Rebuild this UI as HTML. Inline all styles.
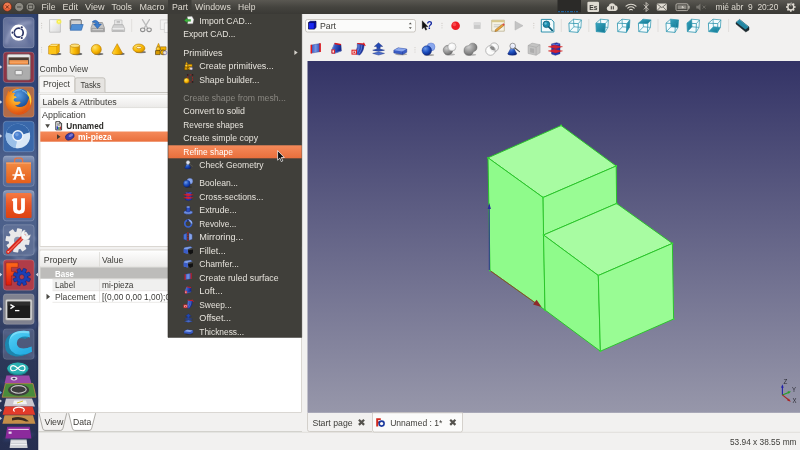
<!DOCTYPE html>
<html lang="es"><head><meta charset="utf-8"><title>FreeCAD</title>
<style>html,body{margin:0;padding:0;background:#f2f1f0;overflow:hidden}svg{display:block;will-change:transform}text{font-family:"Liberation Sans", sans-serif;white-space:pre}</style>
</head><body>
<svg width="800" height="450" viewBox="0 0 800 450">
<defs>
<linearGradient id="gview" x1="0" y1="0" x2="0" y2="1"><stop offset="0" stop-color="#333366"/><stop offset="1" stop-color="#9797aa"/></linearGradient>
<linearGradient id="gpanel" x1="0" y1="0" x2="0" y2="1"><stop offset="0" stop-color="#5a5852"/><stop offset="0.5" stop-color="#45443f"/><stop offset="1" stop-color="#3a3935"/></linearGradient>
<linearGradient id="gorange" x1="0" y1="0" x2="0" y2="1"><stop offset="0" stop-color="#f58a5a"/><stop offset="1" stop-color="#e96f3c"/></linearGradient>

<radialGradient id="gy" cx="0.35" cy="0.3" r="0.8"><stop offset="0" stop-color="#ffe36a"/><stop offset="0.6" stop-color="#f7b500"/><stop offset="1" stop-color="#c98600"/></radialGradient>
<linearGradient id="gyl" x1="0" y1="0" x2="1" y2="0"><stop offset="0" stop-color="#ffd84a"/><stop offset="0.5" stop-color="#f9b800"/><stop offset="1" stop-color="#d08c00"/></linearGradient>
<radialGradient id="gblue" cx="0.35" cy="0.3" r="0.8"><stop offset="0" stop-color="#6f9be8"/><stop offset="0.5" stop-color="#1c4fc0"/><stop offset="1" stop-color="#0a1f70"/></radialGradient>
<radialGradient id="ggrey" cx="0.35" cy="0.3" r="0.8"><stop offset="0" stop-color="#cfcfcf"/><stop offset="0.6" stop-color="#8e8e8e"/><stop offset="1" stop-color="#5f5f5f"/></radialGradient>
<radialGradient id="gwhite" cx="0.4" cy="0.35" r="0.8"><stop offset="0" stop-color="#ffffff"/><stop offset="0.7" stop-color="#f1f1f1"/><stop offset="1" stop-color="#bdbdbd"/></radialGradient>
<linearGradient id="gpage" x1="0" y1="0" x2="1" y2="1"><stop offset="0" stop-color="#ffffff"/><stop offset="1" stop-color="#d9d9d9"/></linearGradient>
<linearGradient id="gteal" x1="0" y1="0" x2="1" y2="1"><stop offset="0" stop-color="#3aa6c0"/><stop offset="1" stop-color="#0f7590"/></linearGradient>
<radialGradient id="gglow" cx="0.5" cy="0.5" r="0.5"><stop offset="0" stop-color="#ffffc0"/><stop offset="0.45" stop-color="#f8ee40"/><stop offset="1" stop-color="#f8ee40" stop-opacity="0"/></radialGradient>
<linearGradient id="gbl" x1="0" y1="0" x2="1" y2="0"><stop offset="0" stop-color="#3454c0"/><stop offset="0.5" stop-color="#7696e4"/><stop offset="1" stop-color="#2c4cb8"/></linearGradient>
<linearGradient id="gbl2" x1="0" y1="0" x2="1" y2="0.3"><stop offset="0" stop-color="#5a7cdc"/><stop offset="0.6" stop-color="#2a48b4"/><stop offset="1" stop-color="#14268a"/></linearGradient>
<filter id="soft" x="-20%" y="-20%" width="140%" height="140%"><feGaussianBlur stdDeviation="0.35"/></filter>
<filter id="soft2" x="-20%" y="-20%" width="140%" height="140%"><feGaussianBlur stdDeviation="0.6"/></filter>

<linearGradient id="glaunch" x1="0" y1="0" x2="0" y2="1">
<stop offset="0" stop-color="#2e416f"/><stop offset="0.24" stop-color="#31467a"/><stop offset="0.325" stop-color="#4a5e8a"/><stop offset="0.5" stop-color="#4c608a"/><stop offset="0.58" stop-color="#46577c"/><stop offset="0.65" stop-color="#38466e"/><stop offset="0.78" stop-color="#2c3859"/><stop offset="1" stop-color="#262e50"/></linearGradient>
<radialGradient id="gdash" cx="0.5" cy="0.5" r="0.75"><stop offset="0" stop-color="#a2aac6"/><stop offset="0.45" stop-color="#7480a6"/><stop offset="1" stop-color="#5a6892"/></radialGradient>
<linearGradient id="gbag" x1="0" y1="0" x2="0" y2="1"><stop offset="0" stop-color="#f28a42"/><stop offset="1" stop-color="#e65f1c"/></linearGradient>
<linearGradient id="gu1" x1="0" y1="0" x2="0" y2="1"><stop offset="0" stop-color="#f47a44"/><stop offset="0.5" stop-color="#ea5322"/><stop offset="1" stop-color="#dc4212"/></linearGradient>
<linearGradient id="gcab" x1="0" y1="0" x2="0" y2="1"><stop offset="0" stop-color="#d6d6d6"/><stop offset="1" stop-color="#8f8f8f"/></linearGradient>
<radialGradient id="gff" cx="0.45" cy="0.35" r="0.75"><stop offset="0" stop-color="#ffd23a"/><stop offset="0.45" stop-color="#f58a1c"/><stop offset="1" stop-color="#d8420e"/></radialGradient>
<radialGradient id="gglobe" cx="0.4" cy="0.35" r="0.7"><stop offset="0" stop-color="#5aa0e8"/><stop offset="1" stop-color="#14478e"/></radialGradient>
<linearGradient id="gF" x1="0" y1="0" x2="0" y2="1"><stop offset="0" stop-color="#ff6a1a"/><stop offset="1" stop-color="#e01a10"/></linearGradient>
<linearGradient id="gC" x1="0" y1="0" x2="0.6" y2="1"><stop offset="0" stop-color="#56d2f6"/><stop offset="1" stop-color="#25aee4"/></linearGradient>
<linearGradient id="gtile" x1="0" y1="0" x2="0" y2="1"><stop offset="0" stop-color="#93a2c0"/><stop offset="0.25" stop-color="#6a7ca6"/><stop offset="1" stop-color="#586b98"/></linearGradient>
<filter id="lb" x="-10%" y="-10%" width="120%" height="120%"><feGaussianBlur stdDeviation="0.45"/></filter>
<filter id="lb2" x="-30%" y="-30%" width="160%" height="160%"><feGaussianBlur stdDeviation="1.4"/></filter>
<linearGradient id="ghead" x1="0" y1="0" x2="0" y2="1"><stop offset="0" stop-color="#fdfdfd"/><stop offset="1" stop-color="#ebeae8"/></linearGradient>
</defs>
<rect x="0" y="0" width="800" height="450" fill="#f2f1f0" />
<rect x="307.5" y="61" width="492.5" height="351.8" fill="url(#gview)" />
<polygon points="488,157.8 561.1,125.5 616.2,166 543.1,197.5" fill="#a8fca2" stroke="#27c427" stroke-width="0.95" stroke-linejoin="round"/>
<polygon points="488,157.8 543.1,197.5 545,310 490,270.5" fill="#8ffb8b" stroke="#27c427" stroke-width="0.95" stroke-linejoin="round"/>
<polygon points="543.1,197.5 616.2,166 616.6,203.5 543.5,235" fill="#99fc94" stroke="#27c427" stroke-width="0.95" stroke-linejoin="round"/>
<polygon points="543.5,235 616.6,203.5 672.4,243.4 598.3,275.5" fill="#a8fca2" stroke="#27c427" stroke-width="0.95" stroke-linejoin="round"/>
<polygon points="543.5,235 598.3,275.5 600.4,351.2 545,310" fill="#8ffb8b" stroke="#27c427" stroke-width="0.95" stroke-linejoin="round"/>
<polygon points="598.3,275.5 672.4,243.4 673.6,319 600.4,351.2" fill="#99fc94" stroke="#27c427" stroke-width="0.95" stroke-linejoin="round"/>
<circle cx="488" cy="157.8" r="0.9" fill="#33e033"/>
<circle cx="561.1" cy="125.5" r="0.9" fill="#33e033"/>
<circle cx="616.2" cy="166" r="0.9" fill="#33e033"/>
<circle cx="543.1" cy="197.5" r="0.9" fill="#33e033"/>
<circle cx="616.6" cy="203.5" r="0.9" fill="#33e033"/>
<circle cx="543.5" cy="235" r="0.9" fill="#33e033"/>
<circle cx="490" cy="270.5" r="0.9" fill="#33e033"/>
<circle cx="545" cy="310" r="0.9" fill="#33e033"/>
<circle cx="672.4" cy="243.4" r="0.9" fill="#33e033"/>
<circle cx="598.3" cy="275.5" r="0.9" fill="#33e033"/>
<circle cx="673.6" cy="319" r="0.9" fill="#33e033"/>
<circle cx="600.4" cy="351.2" r="0.9" fill="#33e033"/>
<path d="M489.3 270 L489.3 205" stroke="#2a2a9a" stroke-width="0.9" fill="none"/>
<path d="M489.3 203 l-1.6 6 h3.2z" fill="#2a2a9a"/>
<path d="M490.8 271.2 L537 304" stroke="#a03030" stroke-width="0.9" fill="none"/>
<path d="M541.6 307 l-8.6 -2.6 3.6 -4.6z" fill="#8e2a2a"/>
<path d="M782.4 394.9 V386" stroke="#2222a8" stroke-width="1.1"/><path d="M782.4 384.2 l-1.3 3.6 h2.6z" fill="#2222a8"/>
<path d="M782.4 394.9 L788.6 392.5" stroke="#22a022" stroke-width="1.1"/><path d="M791 391.6 l-3.4 -0.3 1 2.4z" fill="#22a022"/>
<path d="M782.4 394.9 L788.4 399.8" stroke="#a82222" stroke-width="1.1"/><path d="M790.8 401.7 l-3.6 -1.2 1.7 -2z" fill="#a82222"/>
<text x="783.4" y="383.91" font-size="6.4" fill="#2b2b33" font-weight="normal" text-anchor="start" textLength="3.80" lengthAdjust="spacingAndGlyphs" >Z</text>
<text x="792" y="392.21" font-size="6.4" fill="#2b2b33" font-weight="normal" text-anchor="start" textLength="4.00" lengthAdjust="spacingAndGlyphs" >Y</text>
<text x="792.5" y="402.51" font-size="6.4" fill="#2b2b33" font-weight="normal" text-anchor="start" textLength="4.00" lengthAdjust="spacingAndGlyphs" >X</text>
<rect x="0" y="0" width="800" height="14" fill="url(#gpanel)" />
<circle cx="7.3" cy="6.9" r="4.5" fill="#ea6238" stroke="#4a2a1e" stroke-width="0.7"/><circle cx="7.3" cy="5.6" r="3" fill="#f58a5e" opacity="0.6"/>
<path d="M5.7 5.3 l3.2 3.2 M8.9 5.3 l-3.2 3.2" stroke="#6a2410" stroke-width="0.9"/>
<circle cx="19.2" cy="6.9" r="4.5" fill="#8d8b84" stroke="#34332f" stroke-width="0.7"/>
<path d="M17 7 h4.4" stroke="#45443f" stroke-width="1"/>
<circle cx="30.6" cy="6.9" r="4.5" fill="#8d8b84" stroke="#34332f" stroke-width="0.7"/>
<rect x="28.5" y="5.2" width="4.2" height="3.5" fill="none" stroke="#45443f" stroke-width="0.9"/>
<rect x="168" y="0" width="23.5" height="14" fill="#3d3c38" />
<text x="41.5" y="9.97" font-size="9.2" fill="#dfdbd2" font-weight="normal" text-anchor="start" textLength="14.00" lengthAdjust="spacingAndGlyphs" >File</text>
<text x="62.5" y="9.97" font-size="9.2" fill="#dfdbd2" font-weight="normal" text-anchor="start" textLength="15.50" lengthAdjust="spacingAndGlyphs" >Edit</text>
<text x="85" y="9.97" font-size="9.2" fill="#dfdbd2" font-weight="normal" text-anchor="start" textLength="19.50" lengthAdjust="spacingAndGlyphs" >View</text>
<text x="111.5" y="9.97" font-size="9.2" fill="#dfdbd2" font-weight="normal" text-anchor="start" textLength="20.50" lengthAdjust="spacingAndGlyphs" >Tools</text>
<text x="139.5" y="9.97" font-size="9.2" fill="#dfdbd2" font-weight="normal" text-anchor="start" textLength="25.00" lengthAdjust="spacingAndGlyphs" >Macro</text>
<text x="172" y="9.97" font-size="9.2" fill="#dfdbd2" font-weight="normal" text-anchor="start" textLength="16.00" lengthAdjust="spacingAndGlyphs" >Part</text>
<text x="195" y="9.97" font-size="9.2" fill="#dfdbd2" font-weight="normal" text-anchor="start" textLength="35.80" lengthAdjust="spacingAndGlyphs" >Windows</text>
<text x="238" y="9.97" font-size="9.2" fill="#dfdbd2" font-weight="normal" text-anchor="start" textLength="17.50" lengthAdjust="spacingAndGlyphs" >Help</text>
<rect x="557.5" y="0" width="23.5" height="12.3" fill="#2b2a28" />
<path d="M558 11.7 h20" stroke="#1f6fb5" stroke-width="1" stroke-dasharray="2 1 3 1 1 1"/>
<rect x="587.4" y="1.8" width="11.6" height="10.2" rx="1.2" fill="#dfdbd2"/>
<text x="589.2" y="9.76" font-size="8" fill="#3c3b37" font-weight="bold" text-anchor="start" textLength="8.20" lengthAdjust="spacingAndGlyphs" >Es</text>
<path d="M609 11 a2.6 2.6 0 0 1 -0.3 -5.1 a3.4 3.4 0 0 1 6.5 -0.6 a2.9 2.9 0 0 1 0.3 5.7z" fill="#dfdbd2"/>
<path d="M611.3 6.2 v3.2 M613.3 6.2 v3.2" stroke="#3c3b37" stroke-width="1"/>
<g fill="none" stroke="#dfdbd2" stroke-linecap="round"><path d="M626 6.2 a7.2 7.2 0 0 1 10 0" stroke-width="1.1"/><path d="M627.8 8.1 a4.7 4.7 0 0 1 6.4 0" stroke-width="1.1"/><path d="M629.6 9.9 a2.2 2.2 0 0 1 2.8 0" stroke-width="1.1"/></g>
<path d="M643.8 4.6 l4.6 4.6 -2.3 2.3 v-9 l2.3 2.3 -4.6 4.6" fill="none" stroke="#dfdbd2" stroke-width="0.8"/>
<rect x="656.8" y="3.6" width="10" height="7" rx="0.8" fill="#dfdbd2"/><path d="M657.2 4 l4.6 3.6 4.6 -3.6 M657.2 10.3 l3.2 -3.2 M666.4 10.3 l-3.2 -3.2" stroke="#3c3b37" stroke-width="0.7" fill="none"/>
<rect x="676" y="3.8" width="12" height="6.8" rx="1.2" fill="none" stroke="#bdb9b0" stroke-width="0.9"/><rect x="688.3" y="5.8" width="1.3" height="2.8" fill="#bdb9b0"/><rect x="677.6" y="5.3" width="8.8" height="3.8" fill="#8d8a83"/><path d="M681 7.2 l2.4 -1.4 -0.6 1.2 1.6 0 -2.4 1.4 0.6 -1.2z" fill="#e8e5de"/>
<path d="M696.3 5.8 h1.8 l2.4 -2.2 v7.2 l-2.4 -2.2 h-1.8z" fill="#77756f"/><path d="M702.6 5.6 l3 3 M705.6 5.6 l-3 3" stroke="#77756f" stroke-width="0.8"/>
<text x="715.4" y="10.07" font-size="9.2" fill="#dfdbd2" font-weight="normal" text-anchor="start" textLength="63.00" lengthAdjust="spacingAndGlyphs" >mié abr  9  20:20</text>
<g transform="translate(790.8 7) scale(0.9)"><circle r="3.3" fill="none" stroke="#dfdbd2" stroke-width="1.5"/><rect x="-0.9" y="-5.3" width="1.8" height="2.2" fill="#dfdbd2" transform="rotate(0)"/><rect x="-0.9" y="-5.3" width="1.8" height="2.2" fill="#dfdbd2" transform="rotate(45)"/><rect x="-0.9" y="-5.3" width="1.8" height="2.2" fill="#dfdbd2" transform="rotate(90)"/><rect x="-0.9" y="-5.3" width="1.8" height="2.2" fill="#dfdbd2" transform="rotate(135)"/><rect x="-0.9" y="-5.3" width="1.8" height="2.2" fill="#dfdbd2" transform="rotate(180)"/><rect x="-0.9" y="-5.3" width="1.8" height="2.2" fill="#dfdbd2" transform="rotate(225)"/><rect x="-0.9" y="-5.3" width="1.8" height="2.2" fill="#dfdbd2" transform="rotate(270)"/><rect x="-0.9" y="-5.3" width="1.8" height="2.2" fill="#dfdbd2" transform="rotate(315)"/><rect x="-0.7" y="-5.2" width="1.4" height="4.4" fill="#dfdbd2" stroke="#42413c" stroke-width="0.5"/></g>
<rect x="0" y="14" width="38.2" height="436" fill="url(#glaunch)"/>
<g filter="url(#lb2)" opacity="0.55"><path d="M2 232 q18 -6 34 8 M0 262 q14 4 38 -14 M4 250 l30 16" stroke="#7e8fb8" stroke-width="2.4" fill="none"/><path d="M0 330 q20 10 38 -6 M2 352 q16 -8 34 6 M0 300 l38 24" stroke="#3f5388" stroke-width="3" fill="none"/><path d="M0 380 l38 30 M0 420 l38 -20 M4 440 l30 -6" stroke="#34477c" stroke-width="3" fill="none"/></g>
<path d="M37.4 14 V450" stroke="#202848" stroke-width="1.6" opacity="0.35"/>
<rect x="3.3" y="17.5" width="30.8" height="30.4" rx="3" fill="url(#gdash)" fill-opacity="1" stroke="#ffffff" stroke-opacity="0.28" stroke-width="0.7"/>
<g filter="url(#lb2)" opacity="0.5"><path d="M6 44 q4 -20 26 -22" stroke="#c8cee8" stroke-width="2" fill="none"/><path d="M8 22 q18 4 22 22" stroke="#4a5890" stroke-width="2.5" fill="none"/></g>
<circle cx="18.7" cy="32.7" r="8.1" fill="#ffffff"/>
<circle cx="18.7" cy="32.7" r="4.5" fill="none" stroke="#2b3566" stroke-width="1.7"/>
<circle cx="12.60" cy="32.70" r="1.7" fill="#ffffff"/><circle cx="12.60" cy="32.70" r="1.1" fill="#2b3566"/>
<circle cx="21.75" cy="27.42" r="1.7" fill="#ffffff"/><circle cx="21.75" cy="27.42" r="1.1" fill="#2b3566"/>
<circle cx="21.75" cy="37.98" r="1.7" fill="#ffffff"/><circle cx="21.75" cy="37.98" r="1.1" fill="#2b3566"/>
<rect x="3.3" y="52.1" width="30.8" height="30.4" rx="3" fill="#8c3546" fill-opacity="1" stroke="#ffffff" stroke-opacity="0.28" stroke-width="0.7"/>
<g filter="url(#lb)"><rect x="7" y="54.2" width="23.4" height="25.8" rx="1.8" fill="url(#gcab)" stroke="#767676" stroke-width="0.6"/><rect x="8" y="54.8" width="21.4" height="2.4" rx="1" fill="#e8e8e8"/><rect x="8.6" y="57.4" width="20.2" height="7.4" fill="#4c3a30"/><rect x="9.4" y="60.2" width="18.6" height="4.4" fill="#ee8a40"/><path d="M9.4 61 h18.6 M9.4 62.6 h18.6" stroke="#f8b67a" stroke-width="0.6"/><rect x="7.6" y="64.8" width="22.2" height="14.6" rx="1" fill="#adadad"/><rect x="7.6" y="64.8" width="22.2" height="1.6" fill="#dedede"/><rect x="15.2" y="70.4" width="7" height="4.4" rx="0.6" fill="#ededed" stroke="#6a6a6a" stroke-width="0.6"/></g>
<path d="M0 65.2 l2.2 1.8 -2.2 1.8z" fill="#d8dbe6"/>
<rect x="3.3" y="86.8" width="30.8" height="30.4" rx="3" fill="#b26c48" fill-opacity="1" stroke="#ffffff" stroke-opacity="0.28" stroke-width="0.7"/>
<g filter="url(#lb)"><circle cx="18.7" cy="101.5" r="13.2" fill="url(#gff)"/><circle cx="20" cy="98.2" r="9.7" fill="url(#gglobe)"/><path d="M13 92.6 q3.6 -3.4 8.6 -3 M22 90.4 q3.4 1 5 3.6" stroke="#8cc4f0" stroke-width="1.3" fill="none" opacity="0.7"/><path d="M5.8 100 q-0.2 -3.4 1.4 -5.8 q0.2 -2.4 1.6 -3.6 q0.2 2 1.4 3.2 q2.4 -1.8 5 -0.6 q-1.4 1.2 -1.2 2.8 q1.8 0 2.8 1.4 l-2.6 1 q-1.4 1.4 0.2 2.800 q2.200 1.200 4.800 0.2 q1.600 0.2 1.400 1.400 q-1.800 2.600 -5.600 2.600 q4.400 3.200 9.600 0.400 q3.600 -2.600 3.600 -7.600 q2.400 5.600 -0.600 10.600 q-4 5.600 -11 5 q-9.600 -1.400 -10.800 -13.800z" fill="url(#gff)"/><path d="M26.6 90.6 q3.8 2.6 4.6 7.6 q0.6 4 -1 7.4 q0.4 -3.600 -0.8 -6 q-0.2 -3 -2.2 -5 q0.4 -2 -0.6 -4z" fill="#ffd640"/></g>
<path d="M0 100.2 l2.2 1.8 -2.2 1.8z" fill="#d8dbe6"/>
<rect x="3.3" y="121.3" width="30.8" height="30.4" rx="3" fill="#3a68aa" fill-opacity="1" stroke="#ffffff" stroke-opacity="0.28" stroke-width="0.7"/>
<g filter="url(#lb)"><circle cx="17.9" cy="136" r="12.2" fill="#a4c6ea"/><path d="M17.9 136 L6.2 132.4 A12.2 12.2 0 0 1 29.6 132.6z" fill="#3466aa"/><path d="M17.9 136 L29.6 132.6 A12.2 12.2 0 0 1 15.4 147.9z" fill="#dbe8f6"/><path d="M17.9 136 L15.4 147.9 A12.2 12.2 0 0 1 6.2 132.4z" fill="#9cc0e8"/><circle cx="17.9" cy="135.8" r="5.7" fill="#eef4fc"/><circle cx="17.9" cy="135.8" r="4.3" fill="#4a80d0"/><circle cx="16.9" cy="134.6" r="1.8" fill="#7aa6e4" opacity="0.8"/></g>
<path d="M0 134.2 l2.2 1.8 -2.2 1.8z" fill="#d8dbe6"/>
<rect x="3.3" y="155.9" width="30.8" height="30.4" rx="3" fill="url(#gtile)" fill-opacity="0.9" stroke="#ffffff" stroke-opacity="0.28" stroke-width="0.7"/>
<g filter="url(#lb)"><path d="M14.6 164 v-3.4 q0 -2.4 2.2 -2.4 h3.6 q2.2 0 2.2 2.4 v3.4" fill="none" stroke="#e8703a" stroke-width="1.3"/><path d="M6.2 162.6 h24.8 v19 q0 1.6 -1.6 1.6 h-21.6 q-1.6 0 -1.6 -1.6z" fill="url(#gbag)"/><path d="M6.2 162.6 h24.8 v1.2 h-24.8z" fill="#f8a468"/></g>
<text x="18.7" y="179.4" font-size="16.4" font-weight="bold" fill="#ffffff" text-anchor="middle" textLength="11" lengthAdjust="spacingAndGlyphs">A</text>
<path d="M12.4 175 h12.6" stroke="#ffffff" stroke-width="1.3"/><path d="M12.8 179.2 h3 M21.6 179.2 h3" stroke="#ffffff" stroke-width="1"/>
<rect x="3.3" y="190.5" width="30.8" height="30.4" rx="3" fill="url(#gtile)" fill-opacity="0.9" stroke="#ffffff" stroke-opacity="0.28" stroke-width="0.7"/>
<rect x="5.9" y="192.9" width="25.7" height="25.2" rx="1.6" fill="url(#gu1)" filter="url(#lb)"/>
<path d="M13.8 198.2 h3.3 v10.4 q0 1.9 2 1.9 q2 0 2 -1.9 v-10.4 h3.8 v10.8 q0 4.9 -5.8 4.9 q-6 0 -6 -4.9 v-7.6 l-1.5 -1.3z" fill="#ffffff" filter="url(#lb)"/>
<rect x="3.3" y="224.8" width="30.8" height="30.4" rx="3" fill="#64749a" fill-opacity="0.75" stroke="#ffffff" stroke-opacity="0.28" stroke-width="0.7"/>
<g filter="url(#lb)"><g transform="translate(17.6 240.4)" fill="#e9e9ea"><circle r="9"/><rect x="-2.6" y="-12" width="5.2" height="6" rx="0.8" transform="rotate(10)"/><rect x="-2.6" y="-12" width="5.2" height="6" rx="0.8" transform="rotate(55)"/><rect x="-2.6" y="-12" width="5.2" height="6" rx="0.8" transform="rotate(100)"/><rect x="-2.6" y="-12" width="5.2" height="6" rx="0.8" transform="rotate(145)"/><rect x="-2.6" y="-12" width="5.2" height="6" rx="0.8" transform="rotate(190)"/><rect x="-2.6" y="-12" width="5.2" height="6" rx="0.8" transform="rotate(235)"/><rect x="-2.6" y="-12" width="5.2" height="6" rx="0.8" transform="rotate(280)"/><rect x="-2.6" y="-12" width="5.2" height="6" rx="0.8" transform="rotate(325)"/><circle r="3.6" fill="#8c96b0"/></g>
<path d="M8 252 L24 236" stroke="#d6281e" stroke-width="4" stroke-linecap="round"/><path d="M9 251.4 L23.6 237" stroke="#f26a5a" stroke-width="1.2" stroke-linecap="round"/><circle cx="8.2" cy="251.8" r="0.9" fill="#f4c8c0"/><path d="M22 238.6 q-2.6 -4.4 1.2 -8 l2 -0.6 -1.2 3.8 2.6 2.4 3.8 -1.4 q-0.4 5 -5.6 5.6z" fill="#f4f4f4" stroke="#c8c8c8" stroke-width="0.4"/></g>
<rect x="3.3" y="259.8" width="30.8" height="30.4" rx="3" fill="#b03c48" fill-opacity="1" stroke="#ffffff" stroke-opacity="0.28" stroke-width="0.7"/>
<g filter="url(#lb)"><path d="M6 262.8 h12 v4.6 h-6.6 v4 h4.6 v4.4 h-4.6 v9.4 h-5.4z" fill="url(#gF)" stroke="#7a1408" stroke-width="0.4"/>
<g transform="translate(21.8 277)" fill="#1a3fb4" stroke="#0a1a60" stroke-width="0.4"><circle r="6"/><rect x="-1.8" y="-8.8" width="3.6" height="4.4" rx="0.5" transform="rotate(22)"/><rect x="-1.8" y="-8.8" width="3.6" height="4.4" rx="0.5" transform="rotate(67)"/><rect x="-1.8" y="-8.8" width="3.6" height="4.4" rx="0.5" transform="rotate(112)"/><rect x="-1.8" y="-8.8" width="3.6" height="4.4" rx="0.5" transform="rotate(157)"/><rect x="-1.8" y="-8.8" width="3.6" height="4.4" rx="0.5" transform="rotate(202)"/><rect x="-1.8" y="-8.8" width="3.6" height="4.4" rx="0.5" transform="rotate(247)"/><rect x="-1.8" y="-8.8" width="3.6" height="4.4" rx="0.5" transform="rotate(292)"/><rect x="-1.8" y="-8.8" width="3.6" height="4.4" rx="0.5" transform="rotate(337)"/><circle r="5.6" stroke="none"/><circle r="2.5" fill="#b03c48" stroke="#0a1a60"/></g></g>
<path d="M0 272.8 l2.2 1.8 -2.2 1.8z" fill="#d8dbe6"/>
<path d="M38 272.8 l-2.2 1.8 2.2 1.8z" fill="#d8dbe6"/>
<rect x="3.3" y="293.9" width="30.8" height="30.4" rx="3" fill="#8d8d96" fill-opacity="0.85" stroke="#ffffff" stroke-opacity="0.28" stroke-width="0.7"/>
<g filter="url(#lb)"><rect x="5.4" y="299.3" width="26.8" height="21" rx="1.6" fill="#d4d4d4" stroke="#8a8a8a" stroke-width="0.5"/><rect x="7.4" y="301.6" width="22.8" height="16.4" fill="#1c1c1c"/><rect x="7.4" y="301.6" width="22.8" height="4" fill="#3a3a3a" opacity="0.6"/><path d="M10.4 304.6 l3.4 2 -3.4 2" stroke="#ffffff" stroke-width="1.3" fill="none"/><path d="M15 310.6 h4.4" stroke="#ffffff" stroke-width="1.3"/></g>
<path d="M0 307.2 l2.2 1.8 -2.2 1.8z" fill="#d8dbe6"/>
<rect x="3.3" y="328.9" width="30.8" height="30.4" rx="3" fill="#8a94b4" fill-opacity="0.35" stroke="#ffffff" stroke-opacity="0.2" stroke-width="0.7"/>
<g filter="url(#lb)"><path d="M29.2 331.2 L30 337.4 Q24 335.5 19.5 338 Q16.6 340 16.8 343 Q17 346.5 20 348 Q25 349.5 31.6 346.4 L32 351.8 Q26 355.2 19.5 354.8 Q9 353.6 8.8 343.6 Q9 332 20 331 Q25 330.6 29.2 331.2z" transform="translate(-3.8 1.7)" fill="#1b86ae"/><path d="M29.2 331.2 L30 337.4 Q24 335.5 19.5 338 Q16.6 340 16.8 343 Q17 346.5 20 348 Q25 349.5 31.6 346.4 L32 351.8 Q26 355.2 19.5 354.8 Q9 353.6 8.8 343.6 Q9 332 20 331 Q25 330.6 29.2 331.2z" transform="translate(-1.9 0.85)" fill="#1b86ae"/><path d="M29.2 331.2 L30 337.4 Q24 335.5 19.5 338 Q16.6 340 16.8 343 Q17 346.5 20 348 Q25 349.5 31.6 346.4 L32 351.8 Q26 355.2 19.5 354.8 Q9 353.6 8.8 343.6 Q9 332 20 331 Q25 330.6 29.2 331.2z" fill="url(#gC)"/><path d="M29.2 331.2 Q25 330.6 20 331 Q11 332 9.4 340 Q13 333.4 21 333 Q26 332.8 29.5 333.6z" fill="#8fe2fa" opacity="0.7"/></g>
<g filter="url(#lb)">
<ellipse cx="17.8" cy="369" rx="10.6" ry="6.2" fill="#178a92"/><ellipse cx="17.8" cy="368.2" rx="10.4" ry="5.6" fill="#2bb0b2"/><path d="M17.8 368.4 q-2.4 -2.8 -4.6 -2.8 q-2.6 0 -2.6 2.6 q0 2.6 2.6 2.6 q2.2 0 4.6 -2.4 q2.4 -2.8 4.6 -2.8 q2.6 0 2.6 2.6 q0 2.6 -2.6 2.6 q-2.2 0 -4.6 -2.4z" fill="none" stroke="#ffffff" stroke-width="1.1"/>
<path d="M6.4 375.4 h22.8 l2.2 7.8 h-26.8z" fill="#9a4aa8"/><ellipse cx="14" cy="378.6" rx="3.4" ry="1.8" fill="#e4dcea"/><ellipse cx="14" cy="378.6" rx="1.6" ry="0.9" fill="#3a2a5a"/>
<path d="M5.4 383.6 h27.6 l3 13.6 h-33.8z" fill="#4a8c3a" stroke="#d08a4a" stroke-width="0.7"/><ellipse cx="18.6" cy="390" rx="10.6" ry="5.8" fill="#3c3c3c"/><ellipse cx="18.6" cy="389.4" rx="7.6" ry="3.8" fill="none" stroke="#c8c8c8" stroke-width="1.1"/>
<path d="M6 398.4 h26 l3 8 h-31z" fill="#c9c5cd"/><path d="M14 400.6 h12 l1 3.6 h-14z" fill="#f1f1f1"/><path d="M17 403 l6 -2" stroke="#d8c020" stroke-width="0.9"/>
<path d="M5 406.4 h27.6 l2.6 8.4 h-32.6z" fill="#e23a2a"/><path d="M14.6 411.4 a5.4 2.6 0 1 1 8.6 0" fill="none" stroke="#ffffff" stroke-width="1.2"/>
<path d="M4.6 415.2 h28.4 l2.4 8.6 h-33z" fill="#c48e48"/><path d="M12 418 q7 -2.4 13 0.6 l4 2.6 -3 0.4 q-6 -3 -14 -1z" fill="#3a2c20"/>
<path d="M7.2 426.8 h22.6 l1.6 11.6 h-26z" fill="#8c2c9c"/><path d="M8.4 429.4 h20.4" stroke="#e8d8ee" stroke-width="1.1"/><rect x="8.6" y="431.6" width="3" height="2.2" fill="#e8d8ee"/>
<path d="M10.6 439.6 h16 l1 8.4 h-18z" fill="#cfd0d4"/><path d="M11 442 h15.6 M10.8 444.6 h16" stroke="#f4f4f6" stroke-width="1"/>
</g>
<path d="M0 391.0 l2 1.6 -2 1.6z" fill="#6aa8e8"/>
<path d="M0 399.4 l2 1.6 -2 1.6z" fill="#c8ccd8"/>
<path d="M0 408.79999999999995 l2 1.6 -2 1.6z" fill="#c8ccd8"/>
<path d="M0 416.79999999999995 l2 1.6 -2 1.6z" fill="#c8ccd8"/>
<rect x="305.5" y="19.5" width="110" height="12.5" rx="2" fill="#fbfbfa" stroke="#b9b5ae" stroke-width="0.7"/>
<path d="M308.5 22.6 l1.8 -1.3 h5.7 v6.3 l-1.8 1.5 h-5.7z" fill="#0c14d4" stroke="#06063c" stroke-width="0.7" stroke-linejoin="round"/><path d="M308.5 22.6 h5.7 l1.8 -1.3 M314.2 22.6 v6.5" fill="none" stroke="#06063c" stroke-width="0.6"/><path d="M309 23.1 h4.8 v5.5 h-4.8z" fill="#1a28f0"/>
<text x="320" y="28.97" font-size="9.2" fill="#3c3b37" font-weight="normal" text-anchor="start" textLength="16.00" lengthAdjust="spacingAndGlyphs" >Part</text>
<path d="M408.8 24.3 l1.5 -1.8 1.5 1.8z M408.8 27.3 l1.5 1.8 1.5 -1.8z" fill="#55534e"/>
<path d="M41.6 23.4 v0.01 M41.6 25.599999999999998 v0.01 M41.6 27.799999999999997 v0.01" stroke="#cfccc7" stroke-width="1.2" stroke-linecap="round"/>
<g transform="translate(49.2 19.3)"><path d="M0.4 0.3 h10.8 v12.6 h-10.8z" fill="url(#gpage)" stroke="#b8b8b8" stroke-width="0.7"/><circle cx="9.7" cy="2.4" r="3.2" fill="url(#gglow)"/></g>
<g transform="translate(69.4 19.3)"><path d="M0.6 1.2 l1 -1 h9.6 l0.8 1 v8.6 h-11.4z" fill="#8c8c8c" stroke="#5e5e5e" stroke-width="0.6"/><path d="M2 1.4 h9.2 v6 h-9.2z" fill="#e6e6e6"/><path d="M2.6 2.6 h8 M2.6 3.8 h8" stroke="#aaa" stroke-width="0.5"/><path d="M2.4 5.2 h11.4 l-1.8 5.8 h-11.2z" fill="#4f8ed4" stroke="#2c62a6" stroke-width="0.6"/></g>
<g transform="translate(90.6 19.3)"><path d="M0.4 8.4 l2 -5.2 h9.4 l2 5.2 v4 h-13.4z" fill="#c4c4c4" stroke="#7d7d7d" stroke-width="0.6"/><path d="M0.6 8.6 h13 v3.6 h-13z" fill="#a2a2a2"/><path d="M1.8 10.4 h10.6" stroke="#dcdcdc" stroke-width="0.8"/><path d="M1.4 2.8 q3.4 -3.6 6.6 0.2 v1.8 h2.8 l-3.9 4.4 -3.9 -4.4 h2.6 q-1.2 -2.6 -4.2 -2z" fill="#3a7ccc" stroke="#1b4f98" stroke-width="0.5"/></g>
<g transform="translate(111.6 19.7)" opacity="0.92"><path d="M3 0.3 h7.4 v5 h-7.4z" fill="#e9e9e9" stroke="#a9a9a9" stroke-width="0.6"/><path d="M5 1.8 h3.4 M5 3 h3.4" stroke="#9a9a9a" stroke-width="0.6"/><path d="M0.4 8.8 l1.6 -3.8 h9.4 l1.6 3.8 v3 h-12.6z" fill="#cfcfcf" stroke="#9f9f9f" stroke-width="0.6"/><path d="M1 9 h11.4" stroke="#f2f2f2" stroke-width="1"/><path d="M1.4 10.9 h10.6" stroke="#aaa" stroke-width="0.7"/></g>
<path d="M131.7 19 v13" stroke="#dcd9d5" stroke-width="0.8"/>
<g transform="translate(139.8 19.2)" fill="none" stroke="#a4a4a4" stroke-linecap="round"><path d="M2.6 0.4 L7.8 9 M9.6 0.4 L4.4 9" stroke-width="1.3" stroke="#bcbcbc"/><ellipse cx="2.9" cy="10.6" rx="2.2" ry="1.8" stroke-width="1.1" stroke="#8e8e8e"/><ellipse cx="9.3" cy="10.6" rx="2.2" ry="1.8" stroke-width="1.1" stroke="#8e8e8e"/></g>
<g transform="translate(160 19.5)" opacity="0.7"><path d="M0.4 0.4 h7.6 v9.6 h-7.6z" fill="#f3f3f3" stroke="#b5b5b5" stroke-width="0.6"/><path d="M4.4 3.4 h7.6 v9.6 h-7.6z" fill="#f8f8f8" stroke="#b5b5b5" stroke-width="0.6"/></g>
<g transform="translate(421.8 20.4)"><path d="M0.4 0.4 v8.2 l2 -1.8 1.4 3 1.3 -0.6 -1.4 -2.9 h2.6z" fill="#111" stroke="#111" stroke-width="0.3"/><text x="4.6" y="8.6" font-size="10" font-weight="bold" fill="#1428a0">?</text></g>
<path d="M442 23.4 v0.01 M442 25.599999999999998 v0.01 M442 27.799999999999997 v0.01" stroke="#cfccc7" stroke-width="1.2" stroke-linecap="round"/>
<circle cx="455.6" cy="25.8" r="4.3" fill="#ee1c24"/><circle cx="454.40000000000003" cy="24.400000000000002" r="1.8" fill="#ff6a6a" opacity="0.6" filter="url(#soft)"/>
<rect x="473.8" y="22.5" width="6.8" height="6.4" fill="#c9c9c9"/><rect x="473.8" y="22.5" width="6.8" height="2.6" fill="#dadada"/>
<g transform="translate(491.3 18.8)"><path d="M0.4 1.4 h12.6 v11 h-12.6z" fill="#f6f3e6" stroke="#a79c72" stroke-width="0.6"/><path d="M0.4 1.4 h12.6 v2 h-12.6z" fill="#d8c98a"/><path d="M2.4 6 h7 M2.4 8 h5" stroke="#a9a9a9" stroke-width="0.6"/><path d="M4.4 10.6 l6.6 -5.2 1.4 1.6 -6.6 5.2 -2.2 0.6z" fill="#e8a33a" stroke="#8a5a18" stroke-width="0.5"/><path d="M11 5.4 l1.4 1.6 1.2 -0.9 -1.4 -1.7z" fill="#d44"/></g>
<path d="M515 21.3 l8 4.4 -8 4.4z" fill="#c4c4c4" stroke="#b2b2b2" stroke-width="0.5"/>
<path d="M533.8 23.4 v0.01 M533.8 25.599999999999998 v0.01 M533.8 27.799999999999997 v0.01" stroke="#cfccc7" stroke-width="1.2" stroke-linecap="round"/>
<g transform="translate(540.8 18.9)"><path d="M0.5 0.5 h10 l2.6 2.6 v10 h-12.6z" fill="#f2fbfd" stroke="#1a86a4" stroke-width="0.9"/><circle cx="5.6" cy="5.4" r="3.3" fill="#1d8eae" stroke="#0c5e78" stroke-width="0.8"/><circle cx="4.8" cy="4.6" r="1.2" fill="#7fd0e4" opacity="0.8"/><path d="M8 8 l3.4 3.4" stroke="#0c5e78" stroke-width="1.8" stroke-linecap="round"/></g>
<path d="M561.3 19 v13" stroke="#dcd9d5" stroke-width="0.8"/>
<g transform="translate(568.5 18.8)" stroke-linejoin="round">
<path d="M0.4 4.4 L5 0.4 L12.9 1.1 L12.4 8.6 L9.4 13.6 L0.8 12.8z" fill="#f4fbfd"/>
<polygon points="5,0.4 12.9,1.1 12.4,8.6 5.4,8" fill="none" stroke="#2a93ad" stroke-width="0.7"/>
<path d="M0.4 4.4 L5 0.4" stroke="#2a93ad" stroke-width="0.7"/>
<path d="M9.8 4.8 L12.9 1.1" stroke="#2a93ad" stroke-width="0.7"/>
<path d="M9.4 13.6 L12.4 8.6" stroke="#2a93ad" stroke-width="0.7"/>
<path d="M0.8 12.8 L5.4 8" stroke="#2a93ad" stroke-width="0.7"/>
<polygon points="0.4,4.4 9.8,4.8 9.4,13.6 0.8,12.8" fill="none" stroke="#2a93ad" stroke-width="0.8"/>
</g>
<path d="M588.8 19 v13" stroke="#dcd9d5" stroke-width="0.8"/>
<g transform="translate(595.5 18.8)" stroke-linejoin="round">
<path d="M0.4 4.4 L5 0.4 L12.9 1.1 L12.4 8.6 L9.4 13.6 L0.8 12.8z" fill="#f4fbfd"/>
<polygon points="5,0.4 12.9,1.1 12.4,8.6 5.4,8" fill="none" stroke="#2a93ad" stroke-width="0.7"/>
<path d="M0.4 4.4 L5 0.4" stroke="#2a93ad" stroke-width="0.7"/>
<path d="M9.8 4.8 L12.9 1.1" stroke="#2a93ad" stroke-width="0.7"/>
<path d="M9.4 13.6 L12.4 8.6" stroke="#2a93ad" stroke-width="0.7"/>
<path d="M0.8 12.8 L5.4 8" stroke="#2a93ad" stroke-width="0.7"/>
<polygon points="0.4,4.4 9.8,4.8 9.4,13.6 0.8,12.8" fill="url(#gteal)"/>
<polygon points="0.4,4.4 9.8,4.8 9.4,13.6 0.8,12.8" fill="none" stroke="#2a93ad" stroke-width="0.8"/>
</g>
<g transform="translate(617 18.8)" stroke-linejoin="round">
<path d="M0.4 4.4 L5 0.4 L12.9 1.1 L12.4 8.6 L9.4 13.6 L0.8 12.8z" fill="#f4fbfd"/>
<polygon points="5,0.4 12.9,1.1 12.4,8.6 5.4,8" fill="none" stroke="#2a93ad" stroke-width="0.7"/>
<path d="M0.4 4.4 L5 0.4" stroke="#2a93ad" stroke-width="0.7"/>
<path d="M9.8 4.8 L12.9 1.1" stroke="#2a93ad" stroke-width="0.7"/>
<path d="M9.4 13.6 L12.4 8.6" stroke="#2a93ad" stroke-width="0.7"/>
<path d="M0.8 12.8 L5.4 8" stroke="#2a93ad" stroke-width="0.7"/>
<polygon points="9.8,4.8 12.9,1.1 12.4,8.6 9.4,13.6" fill="url(#gteal)"/>
<polygon points="0.4,4.4 9.8,4.8 9.4,13.6 0.8,12.8" fill="none" stroke="#2a93ad" stroke-width="0.8"/>
</g>
<g transform="translate(638 18.8)" stroke-linejoin="round">
<path d="M0.4 4.4 L5 0.4 L12.9 1.1 L12.4 8.6 L9.4 13.6 L0.8 12.8z" fill="#f4fbfd"/>
<polygon points="5,0.4 12.9,1.1 12.4,8.6 5.4,8" fill="none" stroke="#2a93ad" stroke-width="0.7"/>
<path d="M0.4 4.4 L5 0.4" stroke="#2a93ad" stroke-width="0.7"/>
<path d="M9.8 4.8 L12.9 1.1" stroke="#2a93ad" stroke-width="0.7"/>
<path d="M9.4 13.6 L12.4 8.6" stroke="#2a93ad" stroke-width="0.7"/>
<path d="M0.8 12.8 L5.4 8" stroke="#2a93ad" stroke-width="0.7"/>
<polygon points="0.4,4.4 5,0.4 12.9,1.1 9.8,4.8" fill="url(#gteal)"/>
<polygon points="0.4,4.4 9.8,4.8 9.4,13.6 0.8,12.8" fill="none" stroke="#2a93ad" stroke-width="0.8"/>
</g>
<path d="M658 19 v13" stroke="#dcd9d5" stroke-width="0.8"/>
<g transform="translate(665.6 18.8)" stroke-linejoin="round">
<path d="M0.4 4.4 L5 0.4 L12.9 1.1 L12.4 8.6 L9.4 13.6 L0.8 12.8z" fill="#f4fbfd"/>
<polygon points="5,0.4 12.9,1.1 12.4,8.6 5.4,8" fill="url(#gteal)"/>
<polygon points="5,0.4 12.9,1.1 12.4,8.6 5.4,8" fill="none" stroke="#2a93ad" stroke-width="0.7"/>
<path d="M0.4 4.4 L5 0.4" stroke="#2a93ad" stroke-width="0.7"/>
<path d="M9.8 4.8 L12.9 1.1" stroke="#2a93ad" stroke-width="0.7"/>
<path d="M9.4 13.6 L12.4 8.6" stroke="#2a93ad" stroke-width="0.7"/>
<path d="M0.8 12.8 L5.4 8" stroke="#2a93ad" stroke-width="0.7"/>
<polygon points="0.4,4.4 9.8,4.8 9.4,13.6 0.8,12.8" fill="none" stroke="#2a93ad" stroke-width="0.8"/>
</g>
<g transform="translate(686.6 18.8)" stroke-linejoin="round">
<path d="M0.4 4.4 L5 0.4 L12.9 1.1 L12.4 8.6 L9.4 13.6 L0.8 12.8z" fill="#f4fbfd"/>
<polygon points="0.4,4.4 5,0.4 5.4,8 0.8,12.8" fill="url(#gteal)"/>
<polygon points="5,0.4 12.9,1.1 12.4,8.6 5.4,8" fill="none" stroke="#2a93ad" stroke-width="0.7"/>
<path d="M0.4 4.4 L5 0.4" stroke="#2a93ad" stroke-width="0.7"/>
<path d="M9.8 4.8 L12.9 1.1" stroke="#2a93ad" stroke-width="0.7"/>
<path d="M9.4 13.6 L12.4 8.6" stroke="#2a93ad" stroke-width="0.7"/>
<path d="M0.8 12.8 L5.4 8" stroke="#2a93ad" stroke-width="0.7"/>
<polygon points="0.4,4.4 9.8,4.8 9.4,13.6 0.8,12.8" fill="none" stroke="#2a93ad" stroke-width="0.8"/>
</g>
<g transform="translate(708 18.8)" stroke-linejoin="round">
<path d="M0.4 4.4 L5 0.4 L12.9 1.1 L12.4 8.6 L9.4 13.6 L0.8 12.8z" fill="#f4fbfd"/>
<polygon points="0.8,12.8 5.4,8 12.4,8.6 9.4,13.6" fill="url(#gteal)"/>
<polygon points="5,0.4 12.9,1.1 12.4,8.6 5.4,8" fill="none" stroke="#2a93ad" stroke-width="0.7"/>
<path d="M0.4 4.4 L5 0.4" stroke="#2a93ad" stroke-width="0.7"/>
<path d="M9.8 4.8 L12.9 1.1" stroke="#2a93ad" stroke-width="0.7"/>
<path d="M9.4 13.6 L12.4 8.6" stroke="#2a93ad" stroke-width="0.7"/>
<path d="M0.8 12.8 L5.4 8" stroke="#2a93ad" stroke-width="0.7"/>
<polygon points="0.4,4.4 9.8,4.8 9.4,13.6 0.8,12.8" fill="none" stroke="#2a93ad" stroke-width="0.8"/>
</g>
<path d="M728.6 19 v13" stroke="#dcd9d5" stroke-width="0.8"/>
<g transform="translate(735.6 19)"><path d="M0.4 3.4 l3.6 -3 9.4 7.6 0 3 -3.2 2 -9.8 -8z" fill="#1d2a30" stroke="#10181c" stroke-width="0.4"/><path d="M0.5 3.2 l3.5 -2.8 9.2 7.5 -3.4 2.6z" fill="#2486a2"/><path d="M1.4 2.8 l2.6 -2 8.4 6.8" fill="none" stroke="#5fb6cf" stroke-width="0.6"/></g>
<path d="M41.6 47.6 v0.01 M41.6 49.800000000000004 v0.01 M41.6 52.0 v0.01" stroke="#cfccc7" stroke-width="1.2" stroke-linecap="round"/>
<g transform="translate(48.2 43.7)"><ellipse cx="7.8" cy="10.3" rx="5.4" ry="1.2" fill="#000" opacity="0.55" filter="url(#soft)"/><path d="M0.5 2.6 l3 -2 h7.6 v7.6 l-2.6 2.2 h-8z" fill="#f7b400" stroke="#b87a00" stroke-width="0.6" stroke-linejoin="round"/><path d="M0.5 2.6 h8 l2.6 -2 M8.5 2.6 v7.8" fill="none" stroke="#b87a00" stroke-width="0.5"/><path d="M0.8 2.9 h7.4 v7.2 h-7.4z" fill="#fcc419"/><path d="M1 2.3 l2.6 -1.5 h6.8 l-2 1.5z" fill="#ffe27a"/></g>
<g transform="translate(69.7 43.7)"><ellipse cx="7.6" cy="10.3" rx="5" ry="1.2" fill="#000" opacity="0.55" filter="url(#soft)"/><path d="M0.5 2 v7 a4.7 1.7 0 0 0 9.4 0 v-7z" fill="url(#gyl)" stroke="#b87a00" stroke-width="0.6"/><ellipse cx="5.2" cy="2" rx="4.7" ry="1.7" fill="#ffe27a" stroke="#b87a00" stroke-width="0.6"/></g>
<g transform="translate(91 44.2)"><ellipse cx="7.8" cy="9.9" rx="4.6" ry="1.1" fill="#000" opacity="0.55" filter="url(#soft)"/><circle cx="5.3" cy="5.2" r="5" fill="url(#gy)" stroke="#b87a00" stroke-width="0.6"/></g>
<g transform="translate(111.8 43.4)"><ellipse cx="8" cy="10.5" rx="4.8" ry="1.1" fill="#000" opacity="0.55" filter="url(#soft)"/><path d="M5.4 0.3 L10.6 9.6 a5.2 1.6 0 0 1 -10.4 0z" fill="url(#gyl)" stroke="#b87a00" stroke-width="0.6" stroke-linejoin="round"/></g>
<g transform="translate(132.9 43.7)"><ellipse cx="8" cy="8.4" rx="5.2" ry="1.2" fill="#000" opacity="0.5" filter="url(#soft)"/><ellipse cx="6" cy="4.6" rx="6" ry="4.3" fill="url(#gy)" stroke="#b87a00" stroke-width="0.6"/><ellipse cx="6" cy="3.9" rx="2.5" ry="1.2" fill="#fff6d8" stroke="#b87a00" stroke-width="0.6"/></g>
<g transform="translate(154.3 43) scale(1.0)"><path d="M4.2 0.2 l1.6 3.6 h-3.2z" fill="#f7b400" stroke="#9c6800" stroke-width="0.4"/><circle cx="4" cy="6" r="2.2" fill="url(#gy)" stroke="#7a5200" stroke-width="0.5"/><path d="M6.2 3.8 h5.6 v3.4 h-5.6z" fill="#f7b400" stroke="#7a5200" stroke-width="0.5"/><path d="M1.2 7.6 h4.6 v4 h-4.6z" fill="#d89a00" stroke="#4c3400" stroke-width="0.6"/><ellipse cx="8.8" cy="9.4" rx="2.6" ry="2.4" fill="#f7b400" stroke="#4c3400" stroke-width="0.6"/><circle cx="10.6" cy="9.8" r="2" fill="#f4f4ff" fill-opacity="0.8" stroke="#3a3a9a" stroke-width="0.5"/></g>
<g transform="translate(310 42.5)"><path d="M1.4 2.6 l8.6 -1.6 v8.2 l-8.6 1.4z" fill="url(#gbl)" stroke="#2a3f90" stroke-width="0.4"/><path d="M1.3 2.3 v8.6 M10.1 0.7 v8.8" stroke="#e0161a" stroke-width="1.5"/></g>
<g transform="translate(331.3 42.5)"><path d="M3.3 1 L9.7 2.1 L10.1 8.5 L3.7 10.7 L0.5 10.7 L0.5 7.3z" fill="url(#gbl2)" stroke="#16267a" stroke-width="0.4"/><path d="M3.4 1.2 L0.8 7.3 h2.6 v3.2 L9.9 8.4" fill="none" stroke="#7f9be6" stroke-width="0.5"/><path d="M3.3 1 L9.7 2.1" stroke="#e0161a" stroke-width="1.3"/><rect x="0.7" y="7.4" width="2.6" height="3.2" fill="#f4e4e4" stroke="#e0161a" stroke-width="0.9"/></g>
<g transform="translate(351.3 42.5)"><path d="M6 1 L12.8 1.7 Q12.8 8.6 8.4 12.6 L5 11.8 L5 7.6 Q6.6 4.6 6 1z" fill="url(#gbl2)" stroke="#16267a" stroke-width="0.4"/><path d="M7.6 2 Q8.4 6 6.2 9 M10.6 2.4 Q10.6 7.6 7.8 11" fill="none" stroke="#7f9be6" stroke-width="0.7" opacity="0.8"/><path d="M6 1 L12.8 1.7" stroke="#e0161a" stroke-width="1.2"/><path d="M12.2 0.2 L13.9 3.4" stroke="#e0161a" stroke-width="1.1"/><rect x="0.7" y="7.7" width="4.4" height="3.9" fill="#f4e4e4" fill-opacity="0.9" stroke="#e0161a" stroke-width="1"/><rect x="2.2" y="9" width="1.6" height="1.4" fill="#e0161a"/></g>
<g transform="translate(372.5 42.5)"><path d="M6 0.2 l4.2 3.7 h-2.5 v2.3 h-3.4 v-2.3 h-2.5z" fill="#2348b4" stroke="#10246e" stroke-width="0.4"/><path d="M0.2 7.7 q5.8 -2.2 11.8 0 q-6 2.2 -11.8 0z" fill="#2d52bc" stroke="#142a78" stroke-width="0.4"/><path d="M0.2 10.9 l5.9 -1.6 5.9 1.6 -5.9 1.7z" fill="#4a6ccc" stroke="#142a78" stroke-width="0.4"/></g>
<g transform="translate(393.2 45)"><ellipse cx="8" cy="9.2" rx="6" ry="1.1" fill="#000" opacity="0.3" filter="url(#soft)"/><path d="M0.6 5.2 l4.4 -2.4 8.6 1.2 v3.2 l-4.2 2.4 -8.8 -1.6z" fill="#3a5cc4" stroke="#1a2f80" stroke-width="0.4"/><path d="M0.8 5.2 l4.3 -2.2 8.1 1.1 -4 2.3z" fill="#8aa6ec"/><path d="M9.3 6.5 v3" stroke="#1a2f80" stroke-width="0.4"/></g>
<path d="M415 47.6 v0.01 M415 49.800000000000004 v0.01 M415 52.0 v0.01" stroke="#cfccc7" stroke-width="1.2" stroke-linecap="round"/>
<g transform="translate(421.8 42.5)"><ellipse cx="7.4" cy="12.4" rx="5" ry="1" fill="#000" opacity="0.3" filter="url(#soft)"/><circle cx="9.2" cy="4.4" r="4" fill="#8aa8ee" stroke="#4a66c0" stroke-width="0.4"/><circle cx="5" cy="8" r="4.8" fill="url(#gblue)" stroke="#0a1f70" stroke-width="0.4"/></g>
<g transform="translate(443 42.5)"><ellipse cx="7" cy="12" rx="5" ry="1" fill="#000" opacity="0.25" filter="url(#soft)"/><circle cx="5" cy="7.6" r="4.8" fill="url(#ggrey)" stroke="#555" stroke-width="0.4"/><circle cx="9" cy="4.4" r="4" fill="url(#gwhite)" stroke="#9a9a9a" stroke-width="0.5"/></g>
<g transform="translate(463.8 42.5)"><ellipse cx="7" cy="12.2" rx="5.4" ry="1" fill="#000" opacity="0.25" filter="url(#soft)"/><path d="M5 3.2 a4.3 4.3 0 1 1 4.6 6 a4.8 4.8 0 1 1 -4.6 -6z" fill="url(#ggrey)" stroke="#555" stroke-width="0.4"/></g>
<g transform="translate(485.5 42.5)"><circle cx="8.6" cy="4.8" r="4.4" fill="url(#gwhite)" stroke="#8e8e8e" stroke-width="0.6"/><circle cx="5" cy="8" r="4.8" fill="#fff" fill-opacity="0.75" stroke="#8e8e8e" stroke-width="0.6"/><path d="M5.4 3.4 a4.4 4.4 0 0 1 4 4.6 a4.8 4.8 0 0 1 -5 -3z" fill="#8a8a8a"/></g>
<g transform="translate(507.5 43)"><path d="M4.8 2.4 L9.4 11 a4.7 1.6 0 0 1 -9.2 0z" fill="url(#gblue)" stroke="#0a1f70" stroke-width="0.4"/><circle cx="5.2" cy="3" r="2.8" fill="#eef2ff" fill-opacity="0.9" stroke="#777" stroke-width="0.7"/><path d="M7.4 5 l4.6 3.6" stroke="#555" stroke-width="1.2" stroke-linecap="round"/></g>
<g transform="translate(527.5 42.5)" opacity="0.8"><path d="M0.6 3 l4 -2.4 8 1.6 v8 l-4 2.6 -8 -1.8z" fill="#b9b9b9" stroke="#8c8c8c" stroke-width="0.5"/><path d="M0.6 3 l8 1.8 4 -2.6 M8.6 4.8 v8" fill="none" stroke="#8c8c8c" stroke-width="0.5"/><path d="M2.6 5.4 l4 0.9 v4.4 l-4 -0.9z" fill="#9d9d9d"/></g>
<g transform="translate(548 42.5)"><path d="M3.6 1.4 l5 -1.2 3.4 1 v10 l-4.6 1.6 -3.8 -1.2z" fill="#2038b8" stroke="#0c1660" stroke-width="0.4"/><path d="M3.6 1.4 l3.8 1 4.6 -1.2" fill="none" stroke="#8aa0ec" stroke-width="0.6"/><path d="M0.2 4.2 l6 -1.6 8.4 1.6 -7 2z M0.2 8.4 l6 -1.6 8.4 1.6 -7 2z" fill="#f02020" fill-opacity="0.85" stroke="#c01010" stroke-width="0.3"/></g>
<text x="39.5" y="71.87" font-size="9.2" fill="#3c3b37" font-weight="normal" text-anchor="start" textLength="48.50" lengthAdjust="spacingAndGlyphs" >Combo View</text>
<path d="M38.5 92.5 H302" stroke="#b5b1aa" stroke-width="0.7"/>
<path d="M39 92.8 V78 a2 2 0 0 1 2 -2 H73 a2 2 0 0 1 2 2 V92.8" fill="#f7f6f5" stroke="#b5b1aa" stroke-width="0.7"/>
<path d="M75 92.2 V79.8 a2 2 0 0 1 2 -2 H103 a2 2 0 0 1 2 2 V92.2" fill="#e6e4e1" stroke="#b5b1aa" stroke-width="0.7"/>
<text x="43" y="87.07" font-size="9.2" fill="#3c3b37" font-weight="normal" text-anchor="start" textLength="27.00" lengthAdjust="spacingAndGlyphs" >Project</text>
<text x="80.5" y="87.57" font-size="9.2" fill="#3c3b37" font-weight="normal" text-anchor="start" textLength="20.30" lengthAdjust="spacingAndGlyphs" >Tasks</text>
<rect x="40" y="94.5" width="261.5" height="152" fill="#ffffff" stroke="#c5c1ba" stroke-width="0.6"/>
<rect x="40.3" y="94.8" width="261" height="12.8" fill="url(#ghead)" />
<path d="M40 107.6 H301.5" stroke="#d4d1cc" stroke-width="0.6"/>
<text x="42.5" y="104.77" font-size="9.2" fill="#3c3b37" font-weight="normal" text-anchor="start" textLength="74.30" lengthAdjust="spacingAndGlyphs" >Labels &amp; Attributes</text>
<text x="42" y="118.07" font-size="9.2" fill="#3c3b37" font-weight="normal" text-anchor="start" textLength="43.80" lengthAdjust="spacingAndGlyphs" >Application</text>
<path d="M45.2 124.2 h4.8 l-2.4 3.7z" fill="#4a4843"/>
<g transform="translate(0 0.9)"><path d="M55.8 120.8 h4 l1.8 1.8 v6.4 h-5.8z" fill="#fff" stroke="#111" stroke-width="0.8"/><path d="M59.6 120.8 v2 h2" fill="none" stroke="#111" stroke-width="0.6"/><rect x="56.6" y="125.4" width="1.6" height="3" fill="#2a3cc0"/><rect x="58.2" y="126.2" width="1.4" height="2.2" fill="#20a040"/><rect x="59.6" y="125.6" width="1.4" height="2.8" fill="#c03030"/><path d="M57 123 h2.4 M57 124.2 h3.6" stroke="#222" stroke-width="0.6"/></g>
<text x="66.3" y="129.27" font-size="9.2" fill="#2c2b28" font-weight="bold" text-anchor="start" textLength="37.50" lengthAdjust="spacingAndGlyphs" >Unnamed</text>
<rect x="40.3" y="131.5" width="261" height="10.2" fill="url(#gorange)" />
<path d="M57 134.3 l3.5 2.5 -3.5 2.5z" fill="#4a3a30"/>
<ellipse cx="69.8" cy="136.4" rx="4.6" ry="3.2" transform="rotate(-28 69.8 136.4)" fill="#3b3ba8" stroke="#1a1a55" stroke-width="0.5"/><ellipse cx="70.8" cy="135.3" rx="2.4" ry="1.3" transform="rotate(-28 70.8 135.3)" fill="#8a8ad8" opacity="0.8"/>
<text x="78" y="140.07" font-size="9.2" fill="#ffffff" font-weight="bold" text-anchor="start" textLength="33.80" lengthAdjust="spacingAndGlyphs" >mi-pieza</text>
<rect x="40" y="250" width="261.5" height="162.6" fill="#ffffff" stroke="#c5c1ba" stroke-width="0.6"/>
<rect x="40.3" y="251.4" width="261" height="15.2" fill="url(#ghead)" />
<path d="M40 266.8 H301.5 M99.5 252 V266.5" stroke="#d4d1cc" stroke-width="0.6"/>
<text x="43.8" y="262.87" font-size="9.2" fill="#3c3b37" font-weight="normal" text-anchor="start" textLength="33.20" lengthAdjust="spacingAndGlyphs" >Property</text>
<text x="102" y="262.87" font-size="9.2" fill="#3c3b37" font-weight="normal" text-anchor="start" textLength="21.30" lengthAdjust="spacingAndGlyphs" >Value</text>
<rect x="40.3" y="267.3" width="261" height="11.4" fill="#bdbcba" />
<rect x="52.5" y="279" width="249" height="11.6" fill="#f0f0ef" />
<text x="55" y="277.17" font-size="9.2" fill="#ffffff" font-weight="bold" text-anchor="start" textLength="19.00" lengthAdjust="spacingAndGlyphs" >Base</text>
<path d="M52.5 279 H301.5 M52.5 290.7 H301.5 M52.5 302.3 H301.5 M99.5 279 V302.3" stroke="#dddad6" stroke-width="0.6" fill="none"/>
<text x="55" y="288.37" font-size="9.2" fill="#3c3b37" font-weight="normal" text-anchor="start" textLength="20.00" lengthAdjust="spacingAndGlyphs" >Label</text>
<text x="102" y="288.37" font-size="9.2" fill="#3c3b37" font-weight="normal" text-anchor="start" textLength="31.50" lengthAdjust="spacingAndGlyphs" >mi-pieza</text>
<path d="M46.5 293.8 l3.6 2.9 -3.6 2.9z" fill="#4a4944"/>
<text x="55" y="300.17" font-size="9.2" fill="#3c3b37" font-weight="normal" text-anchor="start" textLength="40.50" lengthAdjust="spacingAndGlyphs" >Placement</text>
<text x="102" y="300.17" font-size="9.2" fill="#3c3b37" font-weight="normal" text-anchor="start" textLength="143.00" lengthAdjust="spacingAndGlyphs" >[(0,00 0,00 1,00);0,00;(0,00 0,00 0,00)]</text>
<path d="M38 431.8 H302" stroke="#b5b1aa" stroke-width="0.7"/>
<path d="M39 413.2 l3.6 15 q0.5 2.2 2.4 2.2 h15.6 q1.9 0 2.4 -2.2 l3.7 -15" fill="#f2f1f0" stroke="#8d8a84" stroke-width="0.7"/>
<path d="M68.7 413.2 l3.6 15 q0.5 2.2 2.4 2.2 h14.6 q1.9 0 2.4 -2.2 l3.9 -15" fill="#ffffff" stroke="#8d8a84" stroke-width="0.7"/>
<text x="44.4" y="425.37" font-size="9.2" fill="#3c3b37" font-weight="normal" text-anchor="start" textLength="19.00" lengthAdjust="spacingAndGlyphs" >View</text>
<text x="73" y="425.37" font-size="9.2" fill="#3c3b37" font-weight="normal" text-anchor="start" textLength="18.30" lengthAdjust="spacingAndGlyphs" >Data</text>
<path d="M302 432.3 H800" stroke="#dcd9d4" stroke-width="0.8"/>
<path d="M307.5 413 V429.5 a2 2 0 0 0 2 2 H372" fill="none" stroke="#c5c1ba" stroke-width="0.7"/>
<path d="M372.5 412.8 V430 a2 2 0 0 0 2 2 H460.5 a2 2 0 0 0 2 -2 V412.8z" fill="#fbfbfa" stroke="#c5c1ba" stroke-width="0.7"/>
<text x="312.4" y="425.57" font-size="9.2" fill="#3c3b37" font-weight="normal" text-anchor="start" textLength="40.20" lengthAdjust="spacingAndGlyphs" >Start page</text>
<path d="M358.9 419.7 l5.2 5.2 M364.1 419.7 l-5.2 5.2" stroke="#55534e" stroke-width="2.2" stroke-linecap="butt"/>
<path d="M450.2 419.7 l5.2 5.2 M455.40000000000003 419.7 l-5.2 5.2" stroke="#55534e" stroke-width="2.2" stroke-linecap="butt"/>
<path d="M376.2 418.2 h4.6 v1.8 h-2.6 v1.6 h2 v1.6 h-2 v3.4 h-2z" fill="#d22a1e"/><circle cx="381.6" cy="423.6" r="2.5" fill="none" stroke="#1c3a9e" stroke-width="1.6"/>
<text x="390.2" y="425.67" font-size="9.2" fill="#3c3b37" font-weight="normal" text-anchor="start" textLength="52.20" lengthAdjust="spacingAndGlyphs" >Unnamed : 1*</text>
<text x="730" y="445.17" font-size="9.2" fill="#3c3b37" font-weight="normal" text-anchor="start" textLength="66.50" lengthAdjust="spacingAndGlyphs" >53.94 x 38.55 mm</text>
<rect x="168" y="14" width="133.7" height="323.4" fill="#403f3a" />
<path d="M168 14 V337.4 H301.7 V14" fill="none" stroke="#2f2e2a" stroke-width="0.6"/>
<rect x="168.3" y="145.3" width="133.4" height="13" fill="url(#gorange)" />
<text x="199.3" y="23.72" font-size="9.2" fill="#e6e3dc" font-weight="normal" text-anchor="start" textLength="52.70" lengthAdjust="spacingAndGlyphs" >Import CAD...</text>
<text x="183.3" y="37.22" font-size="9.2" fill="#e6e3dc" font-weight="normal" text-anchor="start" textLength="52.20" lengthAdjust="spacingAndGlyphs" >Export CAD...</text>
<text x="183.3" y="55.52" font-size="9.2" fill="#e6e3dc" font-weight="normal" text-anchor="start" textLength="39.20" lengthAdjust="spacingAndGlyphs" >Primitives</text>
<text x="199.3" y="69.02" font-size="9.2" fill="#e6e3dc" font-weight="normal" text-anchor="start" textLength="74.50" lengthAdjust="spacingAndGlyphs" >Create primitives...</text>
<text x="199.3" y="82.52" font-size="9.2" fill="#e6e3dc" font-weight="normal" text-anchor="start" textLength="60.00" lengthAdjust="spacingAndGlyphs" >Shape builder...</text>
<text x="183.3" y="100.72" font-size="9.2" fill="#8a8882" font-weight="normal" text-anchor="start" textLength="102.50" lengthAdjust="spacingAndGlyphs" >Create shape from mesh...</text>
<text x="183.3" y="114.22" font-size="9.2" fill="#e6e3dc" font-weight="normal" text-anchor="start" textLength="61.70" lengthAdjust="spacingAndGlyphs" >Convert to solid</text>
<text x="183.3" y="127.72" font-size="9.2" fill="#e6e3dc" font-weight="normal" text-anchor="start" textLength="60.00" lengthAdjust="spacingAndGlyphs" >Reverse shapes</text>
<text x="183.3" y="141.22" font-size="9.2" fill="#e6e3dc" font-weight="normal" text-anchor="start" textLength="74.70" lengthAdjust="spacingAndGlyphs" >Create simple copy</text>
<text x="183.3" y="154.72" font-size="9.2" fill="#ffffff" font-weight="normal" text-anchor="start" textLength="49.70" lengthAdjust="spacingAndGlyphs" >Refine shape</text>
<text x="199.3" y="168.12" font-size="9.2" fill="#e6e3dc" font-weight="normal" text-anchor="start" textLength="64.20" lengthAdjust="spacingAndGlyphs" >Check Geometry</text>
<text x="199.3" y="186.22" font-size="9.2" fill="#e6e3dc" font-weight="normal" text-anchor="start" textLength="38.70" lengthAdjust="spacingAndGlyphs" >Boolean...</text>
<text x="199.3" y="199.72" font-size="9.2" fill="#e6e3dc" font-weight="normal" text-anchor="start" textLength="64.00" lengthAdjust="spacingAndGlyphs" >Cross-sections...</text>
<text x="199.3" y="213.22" font-size="9.2" fill="#e6e3dc" font-weight="normal" text-anchor="start" textLength="37.50" lengthAdjust="spacingAndGlyphs" >Extrude...</text>
<text x="199.3" y="226.72" font-size="9.2" fill="#e6e3dc" font-weight="normal" text-anchor="start" textLength="37.00" lengthAdjust="spacingAndGlyphs" >Revolve...</text>
<text x="199.3" y="240.22" font-size="9.2" fill="#e6e3dc" font-weight="normal" text-anchor="start" textLength="44.00" lengthAdjust="spacingAndGlyphs" >Mirroring...</text>
<text x="199.3" y="253.72" font-size="9.2" fill="#e6e3dc" font-weight="normal" text-anchor="start" textLength="26.50" lengthAdjust="spacingAndGlyphs" >Fillet...</text>
<text x="199.3" y="267.22" font-size="9.2" fill="#e6e3dc" font-weight="normal" text-anchor="start" textLength="39.70" lengthAdjust="spacingAndGlyphs" >Chamfer...</text>
<text x="199.3" y="280.72" font-size="9.2" fill="#e6e3dc" font-weight="normal" text-anchor="start" textLength="79.20" lengthAdjust="spacingAndGlyphs" >Create ruled surface</text>
<text x="199.3" y="294.22" font-size="9.2" fill="#e6e3dc" font-weight="normal" text-anchor="start" textLength="23.50" lengthAdjust="spacingAndGlyphs" >Loft...</text>
<text x="199.3" y="307.72" font-size="9.2" fill="#e6e3dc" font-weight="normal" text-anchor="start" textLength="32.50" lengthAdjust="spacingAndGlyphs" >Sweep...</text>
<text x="199.3" y="321.22" font-size="9.2" fill="#e6e3dc" font-weight="normal" text-anchor="start" textLength="31.70" lengthAdjust="spacingAndGlyphs" >Offset...</text>
<text x="199.3" y="334.72" font-size="9.2" fill="#e6e3dc" font-weight="normal" text-anchor="start" textLength="44.70" lengthAdjust="spacingAndGlyphs" >Thickness...</text>
<path d="M294.4 50.3 l3.3 2.3 -3.3 2.3z" fill="#d6d3cc"/>
<g transform="translate(184 16.2)"><path d="M3.4 0.6 l4.6 -0.4 1.6 3 -0.8 4.2 -5 0.2z" fill="#f4f4f4" stroke="#bdbdbd" stroke-width="0.4"/><path d="M0.2 4.2 l3 -2.4 v1.5 h3.4 v1.8 h-3.4 v1.5z" fill="#3cb43c" stroke="#1c7a1c" stroke-width="0.4"/></g>
<g transform="translate(183.6 61.6) scale(0.72)"><g transform="translate(0 0) scale(1.0)"><path d="M4.2 0.2 l1.6 3.6 h-3.2z" fill="#f7b400" stroke="#9c6800" stroke-width="0.4"/><circle cx="4" cy="6" r="2.2" fill="url(#gy)" stroke="#7a5200" stroke-width="0.5"/><path d="M6.2 3.8 h5.6 v3.4 h-5.6z" fill="#f7b400" stroke="#7a5200" stroke-width="0.5"/><path d="M1.2 7.6 h4.6 v4 h-4.6z" fill="#d89a00" stroke="#4c3400" stroke-width="0.6"/><ellipse cx="8.8" cy="9.4" rx="2.6" ry="2.4" fill="#f7b400" stroke="#4c3400" stroke-width="0.6"/><circle cx="10.6" cy="9.8" r="2" fill="#f4f4ff" fill-opacity="0.8" stroke="#3a3a9a" stroke-width="0.5"/></g></g>
<g transform="translate(183.4 74.2) scale(0.88)"><g transform="translate(0 0)"><path d="M5 0.8 h5.4 v8 h-5.4z" fill="none" stroke="#d01818" stroke-width="0.9" stroke-dasharray="1.6 1"/><circle cx="5" cy="0.9" r="1" fill="#222"/><circle cx="10.4" cy="0.9" r="1" fill="#222"/><circle cx="10.4" cy="8.8" r="1" fill="#222"/><circle cx="3.6" cy="7.4" r="3" fill="url(#gy)" stroke="#7a5200" stroke-width="0.5"/></g></g>
<g transform="translate(184.4 160.4) scale(0.7)"><g transform="translate(0 0)"><path d="M4.8 2.4 L9.4 11 a4.7 1.6 0 0 1 -9.2 0z" fill="url(#gblue)" stroke="#0a1f70" stroke-width="0.4"/><circle cx="5.2" cy="3" r="2.8" fill="#eef2ff" fill-opacity="0.9" stroke="#777" stroke-width="0.7"/><path d="M7.4 5 l4.6 3.6" stroke="#555" stroke-width="1.2" stroke-linecap="round"/></g></g>
<g transform="translate(183.2 178) scale(0.72)"><g transform="translate(0 0)"><ellipse cx="7.4" cy="12.4" rx="5" ry="1" fill="#000" opacity="0.3" filter="url(#soft)"/><circle cx="9.2" cy="4.4" r="4" fill="#8aa8ee" stroke="#4a66c0" stroke-width="0.4"/><circle cx="5" cy="8" r="4.8" fill="url(#gblue)" stroke="#0a1f70" stroke-width="0.4"/></g></g>
<g transform="translate(183.2 191.8) scale(0.7)"><g transform="translate(0 0)"><path d="M3.6 1.4 l5 -1.2 3.4 1 v10 l-4.6 1.6 -3.8 -1.2z" fill="#2038b8" stroke="#0c1660" stroke-width="0.4"/><path d="M3.6 1.4 l3.8 1 4.6 -1.2" fill="none" stroke="#8aa0ec" stroke-width="0.6"/><path d="M0.2 4.2 l6 -1.6 8.4 1.6 -7 2z M0.2 8.4 l6 -1.6 8.4 1.6 -7 2z" fill="#f02020" fill-opacity="0.85" stroke="#c01010" stroke-width="0.3"/></g></g>
<g transform="translate(183.6 205.8)"><ellipse cx="4.6" cy="6.6" rx="4.4" ry="1.8" fill="#6f8fe0" stroke="#1a2f80" stroke-width="0.4"/><path d="M2.8 1.2 h3.6 v4.6 q-1.8 0.8 -3.6 0z" fill="#2a4cc0" stroke="#10206a" stroke-width="0.4"/><ellipse cx="4.6" cy="1.2" rx="1.8" ry="0.7" fill="#8aa6ec"/></g>
<g transform="translate(183.6 219.2)"><circle cx="4.6" cy="4.4" r="3.4" fill="none" stroke="#3a62d0" stroke-width="1.7"/><path d="M4.6 1 a3.4 3.4 0 0 1 3.4 3.4" fill="none" stroke="#9ab4f0" stroke-width="1.5"/><path d="M3.2 0.2 l2.6 1 -2 1.6z" fill="#1a2f80"/></g>
<g transform="translate(183.4 232.2)"><path d="M0.2 2.2 l3.2 -1.4 v7.4 l-3.2 -1.2z" fill="#4a72d8" stroke="#1a2f80" stroke-width="0.3"/><path d="M8.8 2.2 l-3.2 -1.4 v7.4 l3.2 -1.2z" fill="#86a4ea" stroke="#1a2f80" stroke-width="0.3"/><path d="M4.5 0 v9.2" stroke="#e01818" stroke-width="0.9" stroke-dasharray="1.6 0.8"/></g>
<g transform="translate(183.4 246.2)"><path d="M4 4.4 l5.6 -1 v3.4 l-3 1.4z" fill="#111"/><path d="M0.4 2.6 q0 -1.4 1.6 -1.6 l5 -0.8 2 1.2 -4.6 1.6 v4.6 l-4 -1z" fill="#7f9fe8" stroke="#2a3f90" stroke-width="0.3"/><path d="M0.4 2.8 l4 0.6 v4.2 l-4 -1z" fill="#3a5cc8"/></g>
<g transform="translate(183.4 259.8)"><path d="M4 4.4 l5.6 -1 v3.4 l-3 1.4z" fill="#111"/><path d="M0.4 2.6 q0 -1.4 1.6 -1.6 l5 -0.8 2 1.2 -4.6 1.6 v4.6 l-4 -1z" fill="#7f9fe8" stroke="#2a3f90" stroke-width="0.3"/><path d="M0.4 2.8 l4 0.6 v4.2 l-4 -1z" fill="#3a5cc8"/></g>
<g transform="translate(184.2 272.6) scale(0.68)"><g transform="translate(0 0)"><path d="M1.4 2.6 l8.6 -1.6 v8.2 l-8.6 1.4z" fill="url(#gbl)" stroke="#2a3f90" stroke-width="0.4"/><path d="M1.3 2.3 v8.6 M10.1 0.7 v8.8" stroke="#e0161a" stroke-width="1.5"/></g></g>
<g transform="translate(184.6 286.2) scale(0.66)"><g transform="translate(0 0)"><path d="M3.3 1 L9.7 2.1 L10.1 8.5 L3.7 10.7 L0.5 10.7 L0.5 7.3z" fill="url(#gbl2)" stroke="#16267a" stroke-width="0.4"/><path d="M3.4 1.2 L0.8 7.3 h2.6 v3.2 L9.9 8.4" fill="none" stroke="#7f9be6" stroke-width="0.5"/><path d="M3.3 1 L9.7 2.1" stroke="#e0161a" stroke-width="1.3"/><rect x="0.7" y="7.4" width="2.6" height="3.2" fill="#f4e4e4" stroke="#e0161a" stroke-width="0.9"/></g></g>
<g transform="translate(183.4 299.4) scale(0.72)"><g transform="translate(0 0)"><path d="M6 1 L12.8 1.7 Q12.8 8.6 8.4 12.6 L5 11.8 L5 7.6 Q6.6 4.6 6 1z" fill="url(#gbl2)" stroke="#16267a" stroke-width="0.4"/><path d="M7.6 2 Q8.4 6 6.2 9 M10.6 2.4 Q10.6 7.6 7.8 11" fill="none" stroke="#7f9be6" stroke-width="0.7" opacity="0.8"/><path d="M6 1 L12.8 1.7" stroke="#e0161a" stroke-width="1.2"/><path d="M12.2 0.2 L13.9 3.4" stroke="#e0161a" stroke-width="1.1"/><rect x="0.7" y="7.7" width="4.4" height="3.9" fill="#f4e4e4" fill-opacity="0.9" stroke="#e0161a" stroke-width="1"/><rect x="2.2" y="9" width="1.6" height="1.4" fill="#e0161a"/></g></g>
<g transform="translate(184.2 313.6) scale(0.7)"><g transform="translate(0 0)"><path d="M6 0.2 l4.2 3.7 h-2.5 v2.3 h-3.4 v-2.3 h-2.5z" fill="#2348b4" stroke="#10246e" stroke-width="0.4"/><path d="M0.2 7.7 q5.8 -2.2 11.8 0 q-6 2.2 -11.8 0z" fill="#2d52bc" stroke="#142a78" stroke-width="0.4"/><path d="M0.2 10.9 l5.9 -1.6 5.9 1.6 -5.9 1.7z" fill="#4a6ccc" stroke="#142a78" stroke-width="0.4"/></g></g>
<g transform="translate(183.6 327.6) scale(0.7)"><g transform="translate(0 0)"><ellipse cx="8" cy="9.2" rx="6" ry="1.1" fill="#000" opacity="0.3" filter="url(#soft)"/><path d="M0.6 5.2 l4.4 -2.4 8.6 1.2 v3.2 l-4.2 2.4 -8.8 -1.6z" fill="#3a5cc4" stroke="#1a2f80" stroke-width="0.4"/><path d="M0.8 5.2 l4.3 -2.2 8.1 1.1 -4 2.3z" fill="#8aa6ec"/><path d="M9.3 6.5 v3" stroke="#1a2f80" stroke-width="0.4"/></g></g>
<path d="M277.6 150.6 v9.6 l2.2 -2.1 1.5 3.5 1.5 -0.7 -1.5 -3.4 h3z" fill="#111" stroke="#fff" stroke-width="0.7" stroke-linejoin="round"/>
</svg></body></html>
